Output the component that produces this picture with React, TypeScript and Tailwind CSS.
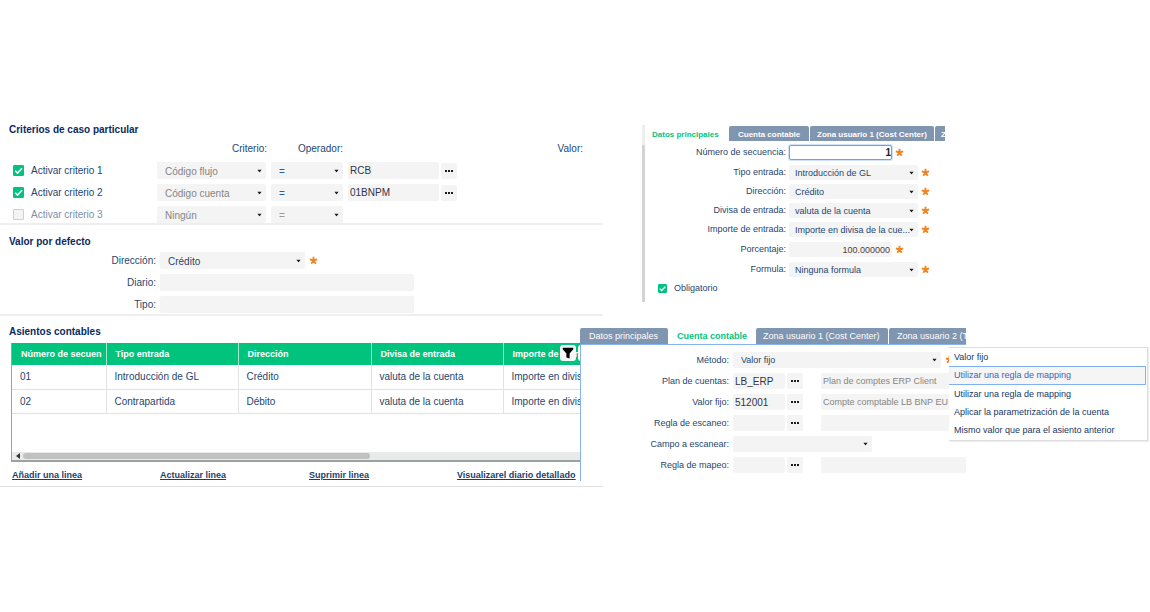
import { useId, useState } from 'react';
import type { ReactNode } from 'react';
import clsx from 'clsx';

const Caret = () => (
    <svg viewBox="0 0 6 4" className="pointer-events-none absolute right-1 top-1/2 h-[3px] w-[5px] -translate-y-1/2 fill-[#1c1c1c]" aria-hidden="true">
        <path d="M0 0h6L3 4z" />
    </svg>
);

const Required = () => (
    <svg viewBox="0 0 10 10" className="mb-px h-[9px] w-[9px] shrink-0 stroke-[#ef8420]" strokeWidth="2.1" fill="none" aria-hidden="true">
        <path d="M5 5V0.7M5 5L0.9 3.8M5 5L9.1 3.8M5 5L2.5 8.6M5 5L7.5 8.6" />
    </svg>
);

type SelectProps = { id?: string; label?: string; options: string[]; className?: string; fieldClass?: string };

const Select = ({ id, label, options, className, fieldClass }: SelectProps) => (
    <div className={clsx('relative shrink-0', className)}>
        <select
            id={id}
            aria-label={label}
            className={clsx('block h-full w-full appearance-none truncate rounded-[2px] bg-[#f4f4f4] pt-px outline-none', fieldClass)}
        >
            {options.map((option) => (
                <option key={option}>{option}</option>
            ))}
        </select>
        <Caret />
    </div>
);

const MoreButton = ({ label }: { label: string }) => (
    <button type="button" aria-label={label} className="flex h-4 w-4 shrink-0 items-center justify-center rounded-[2px] bg-[#f4f4f4]">
        <svg viewBox="0 0 8 2" className="h-[2px] w-2 fill-[#1c1c1c]" aria-hidden="true">
            <path d="M0 0h2v2H0zM3 0h2v2H3zM6 0h2v2H6z" />
        </svg>
    </button>
);

type CheckProps = { label: string; checked?: boolean; size: string; className?: string };

const Check = ({ label, checked = false, size, className }: CheckProps) => {
    const [on, setOn] = useState(checked);
    return (
        <label className={clsx('flex shrink-0 items-center gap-[7px]', className)}>
            <span className={clsx('relative shrink-0', size)}>
                <input
                    type="checkbox"
                    checked={on}
                    onChange={() => setOn(!on)}
                    className="block h-full w-full appearance-none rounded-[1px] border border-[#cfcfcf] bg-[#f4f4f4] checked:border-[#00c47e] checked:bg-[#00c47e]"
                />
                {on && (
                    <svg viewBox="0 0 10 10" className="pointer-events-none absolute inset-0 stroke-white" fill="none" strokeWidth="1.5" aria-hidden="true">
                        <path d="M2 5.2L4.1 7.3L8.2 2.9" />
                    </svg>
                )}
            </span>
            {label}
        </label>
    );
};

const Title = ({ children }: { children: ReactNode }) => (
    <h2 className="pl-[9px] text-[10px] leading-[14px] font-bold text-[#0b2a5e]">{children}</h2>
);

type RowProps = { label: string; labelClass: string; className: string; children: (id: string) => ReactNode };

const Row = ({ label, labelClass, className, children }: RowProps) => {
    const id = useId();
    return (
        <div className={clsx('flex items-center', className)}>
            <label htmlFor={id} className={clsx('shrink-0 text-right whitespace-nowrap', labelClass)}>
                {label}
            </label>
            {children(id)}
        </div>
    );
};

const criteria = [
    { name: 'Activar criterio 1', field: 'Código flujo', value: 'RCB', active: true },
    { name: 'Activar criterio 2', field: 'Código cuenta', value: '01BNPM', active: true },
    { name: 'Activar criterio 3', field: 'Ningún', value: '', active: false },
];

const CriteriaSection = () => (
    <section className="border-b-2 border-[#efefef]">
        <Title>Criterios de caso particular</Title>
        <div className="mt-[5px] mb-[7px] flex leading-[13px]">
            <span className="w-[267px] text-right">Criterio:</span>
            <span className="w-[76px] text-right">Operador:</span>
            <span className="w-[240px] text-right">Valor:</span>
        </div>
        <div className="flex flex-col gap-[5px] pl-[13px]">
            {criteria.map((c) => (
                <div key={c.name} className="flex h-[17px] items-center">
                    <Check label={c.name} checked={c.active} size="h-[11px] w-[11px]" className={clsx('w-36', !c.active && 'text-[#7d8ea6]')} />
                    <Select label={`Criterio de ${c.name}`} options={[c.field]} className="h-[17px] w-[109px]" fieldClass="pl-2 pr-3 text-[#858585]" />
                    <Select
                        label={`Operador de ${c.name}`}
                        options={['=']}
                        className="ml-[5px] h-[17px] w-[72px]"
                        fieldClass={clsx('pl-2 pr-3', c.active ? 'text-[#2f5b94]' : 'text-[#999999]')}
                    />
                    {c.active && (
                        <>
                            <input
                                aria-label={`Valor de ${c.name}`}
                                defaultValue={c.value}
                                className="mr-[2px] ml-[5px] h-[17px] w-[91px] rounded-[2px] bg-[#f4f4f4] px-[2px] text-[#333344]"
                            />
                            <MoreButton label={`Buscar valor de ${c.name}`} />
                        </>
                    )}
                </div>
            ))}
        </div>
    </section>
);

const DefaultValueSection = () => (
    <section className="border-b-2 border-[#efefef] pt-[10px] pb-px">
        <Title>Valor por defecto</Title>
        <div className="mt-[3px] flex flex-col gap-[5px]">
            <Row label="Dirección:" className="h-[17px] gap-1" labelClass="w-[156px]">
                {(id) => (
                    <>
                        <Select id={id} options={['Crédito', 'Débito']} className="h-[17px] w-[145px]" fieldClass="pl-2 pr-3" />
                        <Required />
                    </>
                )}
            </Row>
            {['Diario:', 'Tipo:'].map((label) => (
                <Row key={label} label={label} className="h-[17px] gap-1" labelClass="w-[156px]">
                    {(id) => <input id={id} className="h-[17px] w-[254px] rounded-[2px] bg-[#f4f4f4] px-2" />}
                </Row>
            ))}
        </div>
    </section>
);

const columns = ['Número de secuen', 'Tipo entrada', 'Dirección', 'Divisa de entrada', 'Importe de entrada'];
const entries = [
    ['01', 'Introducción de GL', 'Crédito', 'valuta de la cuenta', 'Importe en divisa'],
    ['02', 'Contrapartida', 'Débito', 'valuta de la cuenta', 'Importe en divisa'],
];

const EntriesSection = () => (
    <section className="border-b border-[#e2e2e2] pt-[9px] pb-[4px]">
        <Title>Asientos contables</Title>
        <div className="mt-1 ml-[11px] flex h-[119px] flex-col justify-between overflow-hidden border-b-2 border-l border-[#9aa3a1]">
            <div className="relative">
                <table className="w-full table-fixed border-collapse text-left">
                    <colgroup>
                        <col className="w-[94px]" />
                        <col className="w-[132px]" />
                        <col className="w-[133px]" />
                        <col className="w-[132px]" />
                        <col />
                    </colgroup>
                    <thead>
                        <tr className="h-[22px] bg-[#00c47e] text-[9px] text-white">
                            {columns.map((name) => (
                                <th key={name} className="overflow-hidden border-r border-[#a5e8cd] pl-[9px] font-bold whitespace-nowrap">
                                    {name}
                                </th>
                            ))}
                        </tr>
                    </thead>
                    <tbody>
                        {entries.map((row) => (
                            <tr key={row[0]} className="h-6 border-b border-[#e2e2e2]">
                                {row.map((cell, i) => (
                                    <td key={i} className="overflow-hidden border-r border-[#e2e2e2] pl-2 whitespace-nowrap">
                                        {cell}
                                    </td>
                                ))}
                            </tr>
                        ))}
                    </tbody>
                </table>
                <div className="absolute top-[2px] right-[9px] flex gap-[2px]">
                    <button type="button" aria-label="Filtrar" className="flex h-4 w-4 items-center justify-center rounded-[3px] bg-[#f7f7f7]">
                        <svg viewBox="0 0 12 12" className="h-3 w-3 fill-black" aria-hidden="true">
                            <path d="M0.7 0.8h10.6v1.4L7.6 6.4v5L4.4 10.4v-4L0.7 2.2z" />
                        </svg>
                    </button>
                    <button type="button" aria-label="Opciones" className="h-4 w-4 rounded-[3px] bg-[#f7f7f7]" />
                </div>
            </div>
            <div className="flex h-2 items-center gap-[3px] bg-[#e9eaea] pl-1">
                <svg viewBox="0 0 4 6" className="h-[6px] w-1 fill-[#333333]" aria-hidden="true">
                    <path d="M4 0v6L0 3z" />
                </svg>
                <div className="h-[6px] w-[347px] rounded-full bg-[#c1c1c1]" />
            </div>
        </div>
        <nav className="mt-[7px] flex pl-3 text-[9px] font-bold text-[#1c3f70] underline whitespace-nowrap">
            <a href="#add" className="w-[148px]">Añadir una linea</a>
            <a href="#update" className="w-[149px]">Actualizar linea</a>
            <a href="#delete" className="w-[148px]">Suprimir linea</a>
            <a href="#journal">Visualizarel diario detallado</a>
        </nav>
    </section>
);

type TabsProps = { tabs: { name: string; width: string }[]; active: number; className?: string; idleClass?: string };

const Tabs = ({ tabs, active, className, idleClass }: TabsProps) => (
    <div role="tablist" className={clsx('flex gap-px overflow-hidden', className)}>
        {tabs.map((tab, i) => (
            <button
                key={tab.name}
                type="button"
                role="tab"
                aria-selected={i === active}
                className={clsx(
                    'h-full shrink-0 overflow-hidden rounded-t-[2px] pt-px text-left whitespace-nowrap',
                    tab.width,
                    i === active ? 'bg-white font-bold text-[#00c47e]' : clsx('bg-[#7f95b0] text-white', idleClass),
                )}
            >
                {tab.name}
            </button>
        ))}
    </div>
);

const mainTabs = [
    { name: 'Datos principales', width: 'w-[83px] pl-[7px]' },
    { name: 'Cuenta contable', width: 'w-[80px] pl-[9px]' },
    { name: 'Zona usuario 1 (Cost Center)', width: 'w-[124px] pl-[7px]' },
    { name: 'Zona usuario 2', width: 'w-[80px] pl-[6px]' },
];

const mainSelects = [
    { label: 'Tipo entrada:', value: 'Introducción de GL' },
    { label: 'Dirección:', value: 'Crédito' },
    { label: 'Divisa de entrada:', value: 'valuta de la cuenta' },
    { label: 'Importe de entrada:', value: 'Importe en divisa de la cue...' },
];

const MainDataPanel = () => (
    <section className="mt-[2px] ml-[39px] flex w-[303px] text-[9px]">
        <div className="w-[3px] shrink-0 border-t-[20px] border-[#eeeeee] bg-[#d3d3d3]" />
        <div className="min-w-0 flex-1">
            <Tabs tabs={mainTabs} active={0} className="mt-px h-[15px] text-[8px]" idleClass="font-bold" />
            <div className="mt-1 flex flex-col gap-1">
                <Row label="Número de secuencia:" className="mb-px h-[15px] gap-[3px]" labelClass="w-[141px]">
                    {(id) => (
                        <>
                            <input
                                id={id}
                                defaultValue="1"
                                className="h-[15px] w-[103px] rounded-[2px] border border-[#6aa2ee] bg-white text-right text-[10px] font-bold text-[#222222] ring-1 ring-[#cfe1fb] outline-none"
                            />
                            <Required />
                        </>
                    )}
                </Row>
                {mainSelects.map((s) => (
                    <Row key={s.label} label={s.label} className="h-[15px] gap-[3px]" labelClass="w-[141px]">
                        {(id) => (
                            <>
                                <Select id={id} options={[s.value]} className="h-[15px] w-[129px]" fieldClass="pl-[6px] pr-1" />
                                <Required />
                            </>
                        )}
                    </Row>
                ))}
                <Row label="Porcentaje:" className="mt-px h-[15px] gap-[3px]" labelClass="w-[141px]">
                    {(id) => (
                        <>
                            <input
                                id={id}
                                defaultValue="100.000000"
                                className="h-[15px] w-[103px] rounded-[2px] bg-[#f4f4f4] pr-[2px] text-right text-[#4a4040]"
                            />
                            <Required />
                        </>
                    )}
                </Row>
                <Row label="Formula:" className="mt-px h-[15px] gap-[3px]" labelClass="w-[141px]">
                    {(id) => (
                        <>
                            <Select id={id} options={['Ninguna formula']} className="h-[15px] w-[129px]" fieldClass="pl-[6px] pr-1" />
                            <Required />
                        </>
                    )}
                </Row>
                <Check label="Obligatorio" checked size="h-[9px] w-[9px]" className="h-[15px] pl-[13px]" />
            </div>
            <div className="h-[6px]" />
        </div>
    </section>
);

const accountTabs = [
    { name: 'Datos principales', width: 'w-[88px] pl-[9px]' },
    { name: 'Cuenta contable', width: 'w-[86px] pl-[8px]' },
    { name: 'Zona usuario 1 (Cost Center)', width: 'w-[132px] pl-[7px]' },
    { name: 'Zona usuario 2 (T', width: 'w-[132px] pl-[8px]' },
];

const accountRows = [
    { label: 'Plan de cuentas:', value: 'LB_ERP', description: 'Plan de comptes ERP Client' },
    { label: 'Valor fijo:', value: '512001', description: 'Compte comptable LB BNP EU' },
    { label: 'Regla de escaneo:', value: '', description: '' },
    { label: 'Campo a escanear:' },
    { label: 'Regla de mapeo:', value: '', description: '' },
];

const methods = [
    'Valor fijo',
    'Utilizar una regla de mapping',
    'Utilizar una regla de mapping',
    'Aplicar la parametrización de la cuenta',
    'Mismo valor que para el asiento anterior',
];

const MethodMenu = () => {
    const [selected, setSelected] = useState(1);
    return (
        <div
            role="listbox"
            aria-label="Método"
            className="absolute top-[19px] left-[369px] flex w-[199px] flex-col border border-l-0 border-[#dedede] bg-white pr-px pb-px text-[9px] shadow-[1px_1px_1px_#eeeeee]"
        >
            {methods.map((name, i) => (
                <button
                    key={i}
                    type="button"
                    role="option"
                    aria-selected={i === selected}
                    onClick={() => setSelected(i)}
                    className={clsx(
                        'pl-[5px] text-left',
                        i === selected
                            ? 'h-[19px] border border-l-0 border-[#7fb0f5] bg-[#f5f5f5] text-[#3f5fc0]'
                            : 'h-[18px] text-[#17375f]',
                    )}
                >
                    {name}
                </button>
            ))}
        </div>
    );
};

const AccountPanel = () => (
    <section className="relative z-10 mt-[26px] -ml-[23px] text-[9px]">
        <div className="w-[386px] overflow-hidden bg-white">
            <Tabs tabs={accountTabs} active={1} className="h-4" />
            <div className="flex flex-col gap-[5px] border-t border-l border-[#86b4f3] pt-[7px] pb-2">
                <Row label="Método:" className="h-4 gap-1" labelClass="w-[148px]">
                    {(id) => (
                        <>
                            <Select id={id} options={['Valor fijo']} className="h-4 w-[208px]" fieldClass="pl-2 pr-3" />
                            <Required />
                        </>
                    )}
                </Row>
                {accountRows.map((row) => (
                    <Row key={row.label} label={row.label} className="h-4 gap-1" labelClass="w-[148px]">
                        {(id) =>
                            row.value === undefined ? (
                                <Select id={id} options={['']} className="h-4 w-[139px]" fieldClass="pl-2 pr-3" />
                            ) : (
                                <>
                                    <input id={id} defaultValue={row.value} className="-mr-[2px] h-4 w-[52px] rounded-[2px] bg-[#f4f4f4] px-[2px] text-[10px] text-[#333344]" />
                                    <MoreButton label={`Buscar ${row.label}`} />
                                    <input
                                        readOnly
                                        aria-label={`Descripción ${row.label}`}
                                        value={row.description}
                                        className="ml-[14px] h-4 w-[180px] shrink-0 rounded-[2px] bg-[#f4f4f4] px-[2px] text-[#858585]"
                                    />
                                </>
                            )
                        }
                    </Row>
                ))}
            </div>
        </div>
        <MethodMenu />
    </section>
);

export default function App() {
    return (
        <main className="flex min-h-screen overflow-hidden bg-white pt-[123px] font-['Liberation_Sans',Arial,sans-serif] text-[10px] leading-[13px] text-[#26466f]">
            <div className="w-[603px] shrink-0">
                <CriteriaSection />
                <DefaultValueSection />
                <EntriesSection />
            </div>
            <div className="min-w-0 flex-1">
                <MainDataPanel />
                <AccountPanel />
            </div>
        </main>
    );
}
